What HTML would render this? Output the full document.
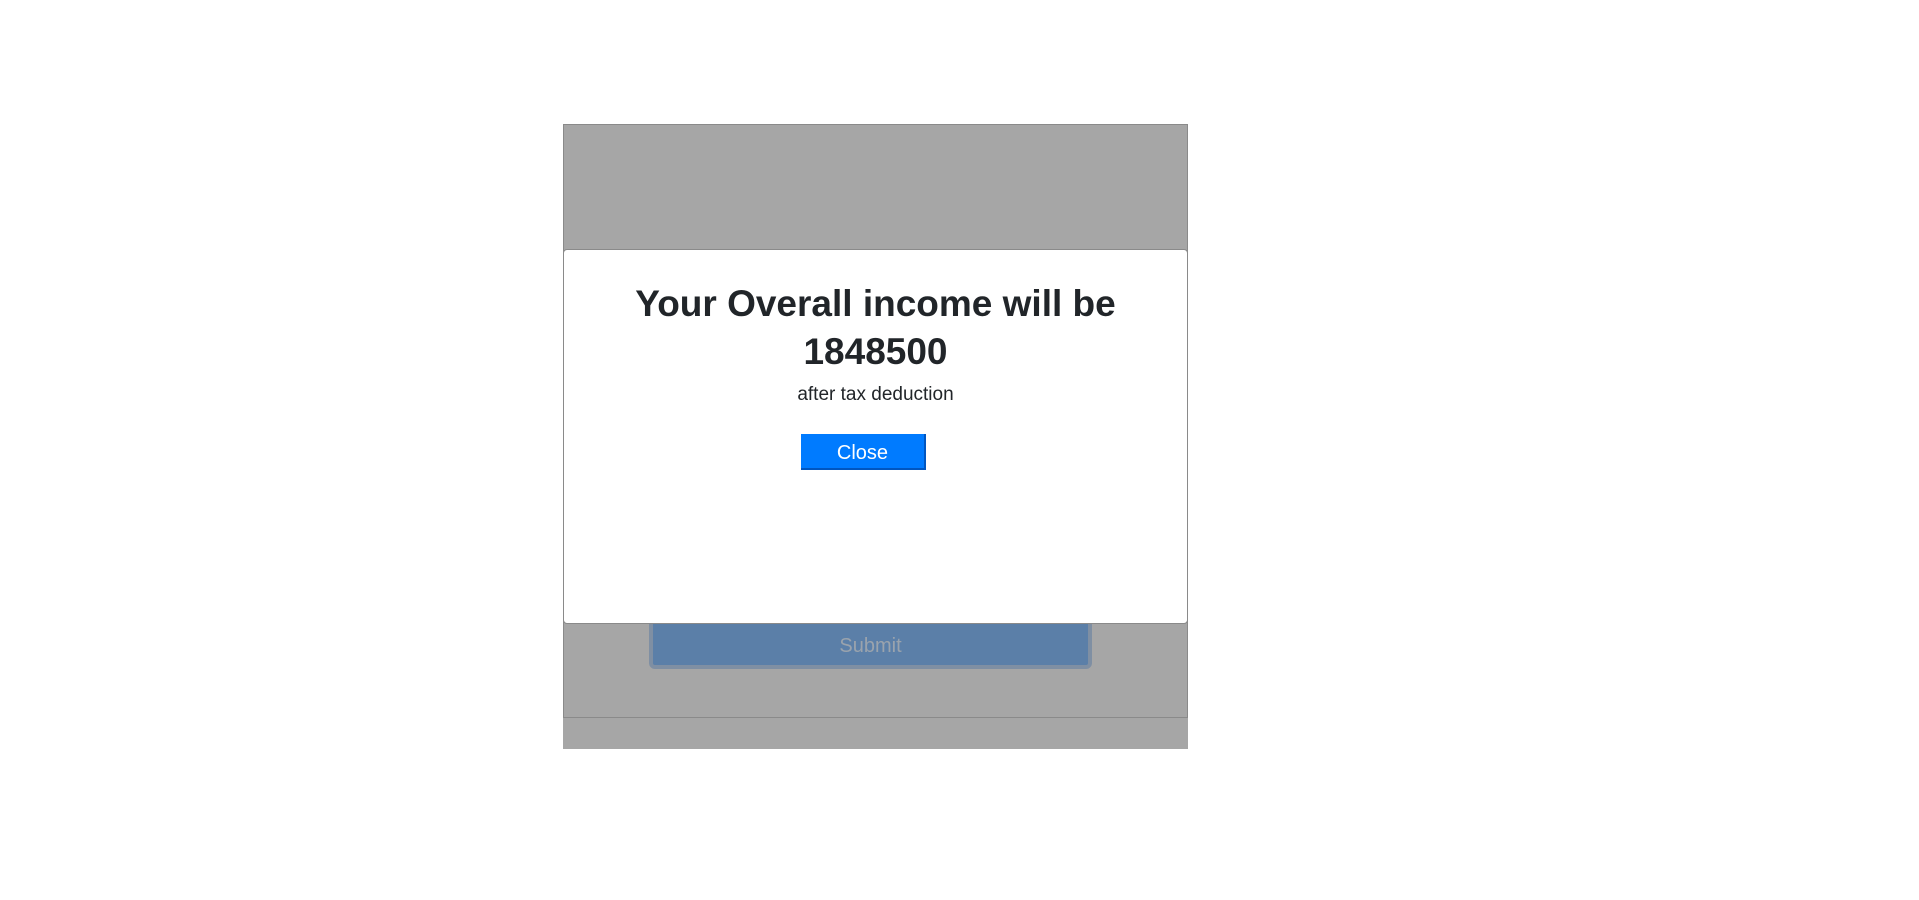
<!DOCTYPE html>
<html><head><meta charset="utf-8"><style>
html,body{margin:0;padding:0;width:1919px;height:900px;background:#fff;overflow:hidden;font-family:"Liberation Sans",sans-serif;}
.bg{position:absolute;left:563px;top:124px;width:625px;height:625px;background:#a6a6a6;}
.inner{position:absolute;left:563px;top:124px;width:623px;height:592px;border:1px solid #8a8a8a;}
.submit{position:absolute;left:649px;top:600px;width:443px;height:69px;background:#5b7fa8;border:4px solid #7f8fa3;box-sizing:border-box;border-radius:6px;color:#9aa3ad;font-size:20px;text-align:center;line-height:84px;}
.modal{position:absolute;left:563px;top:249px;width:623px;height:373px;background:#fff;border:1px solid #8a8a8a;border-radius:4px;text-align:center;color:#212529;}
h1{margin:0;position:absolute;top:30px;left:0;right:0;font-size:37px;font-weight:bold;line-height:48px;}
.sub{position:absolute;top:132px;left:0;right:0;font-size:19px;line-height:26px;}
.btn{position:absolute;left:237px;top:184px;width:125px;height:36px;background:#007bff;border-right:2px solid #0056c0;border-bottom:2px solid #0056c0;box-sizing:border-box;color:#fff;font-size:20px;line-height:38px;}
</style></head><body>
<div class="bg"></div>
<div class="inner"></div>
<div class="submit">Submit</div>
<div class="modal">
<h1>Your Overall income will be<br>1848500</h1>
<div class="sub">after tax deduction</div>
<div class="btn">Close</div>
</div>
</body></html>
